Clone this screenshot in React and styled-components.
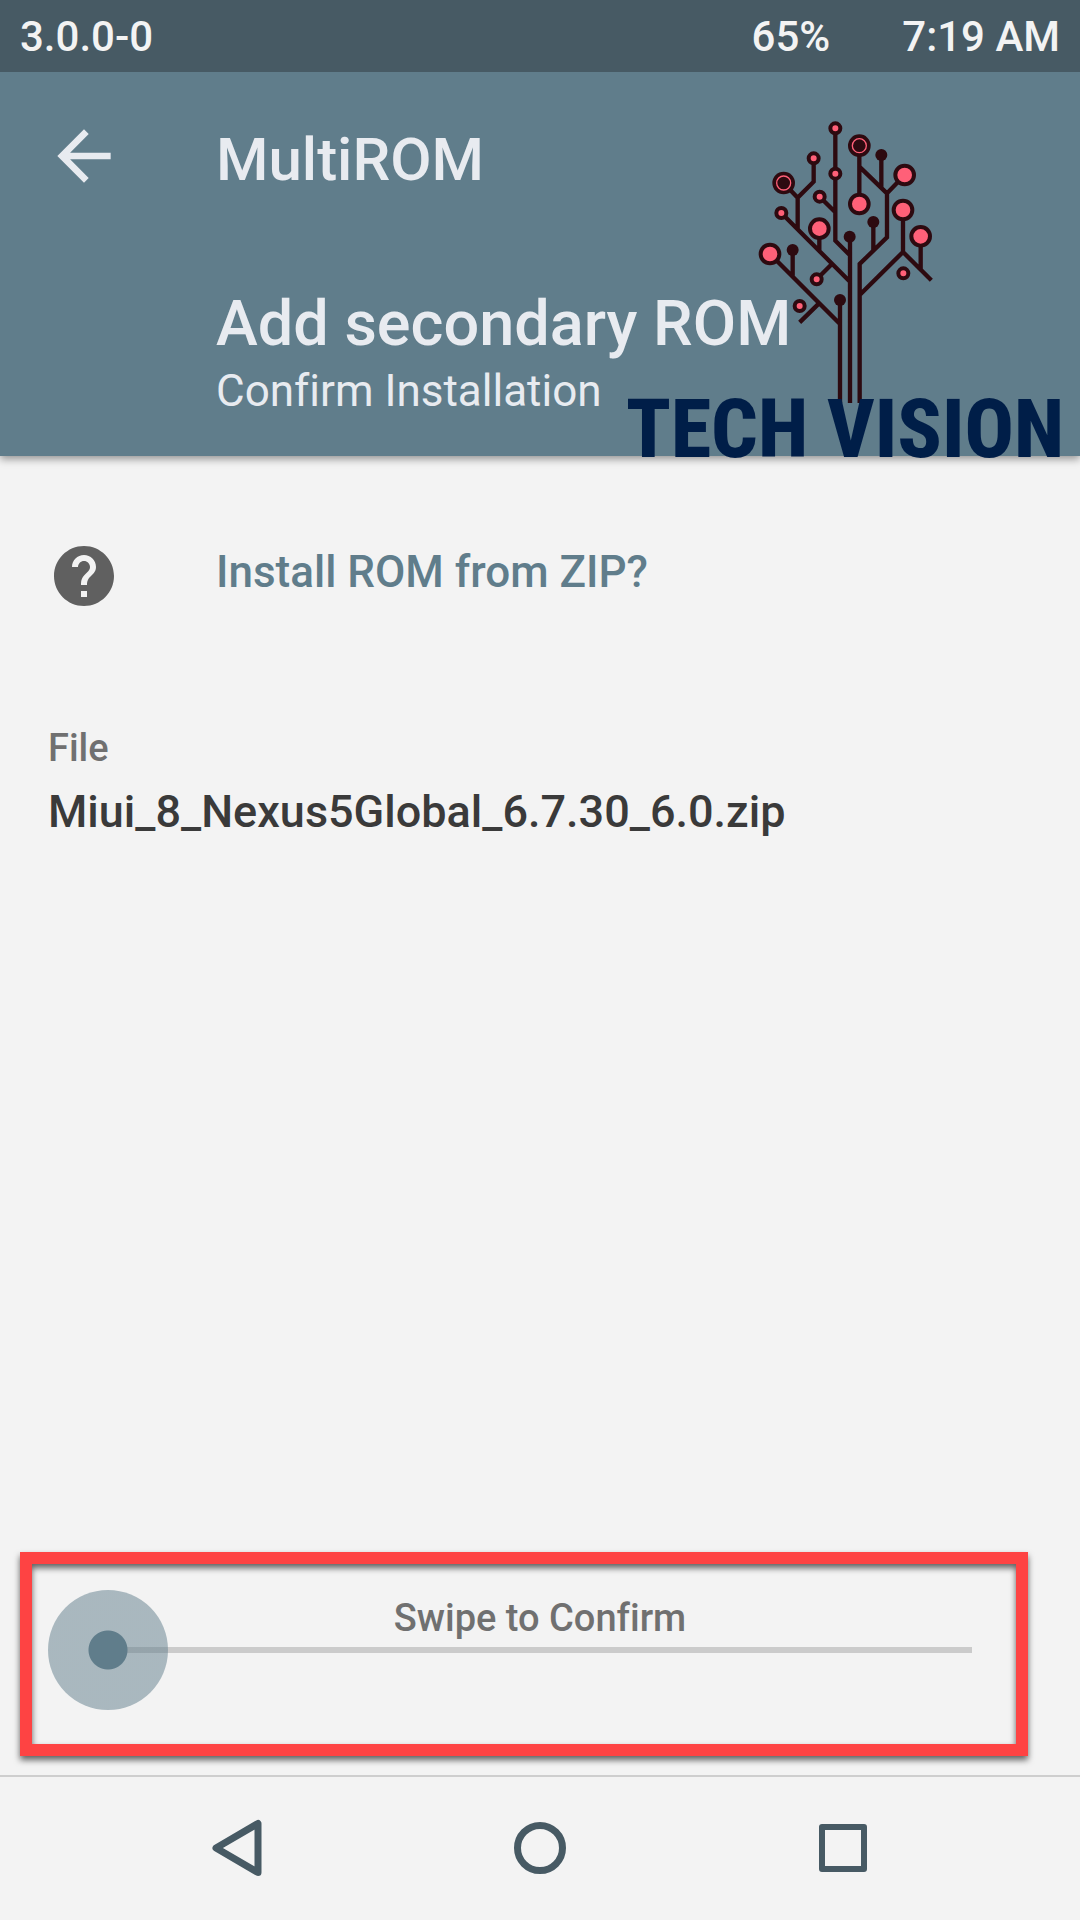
import React, { useState } from "react";
import styled, { createGlobalStyle } from "styled-components";

const GlobalStyle = createGlobalStyle`
  *, *::before, *::after { box-sizing: border-box; }
  body {
    margin: 0;
    background: #f3f3f3;
    font-family: Roboto, "Noto Sans", sans-serif;
    font-variant-ligatures: none;
  }
`;

const Screen = styled.div`
  position: relative;
  display: flex;
  flex-direction: column;
  min-height: 100vh;
`;

const StatusBar = styled.div`
  display: flex;
  align-items: center;
  gap: 72px;
  height: 72px;
  padding: 2px 20px 0;
  background: #475a64;
  color: #f3f3f3;
  font-size: 42px;
  font-weight: 500;
  line-height: 56px;
`;

const Version = styled.span`
  flex: 1;
`;

const Header = styled.header`
  padding-bottom: 36px;
  background: #607d8b;
  color: #e8ebf0;
  box-shadow: 0 3px 8px rgba(0, 0, 0, 0.4);
  clip-path: inset(0 0 -16px 0);
`;

const AppBar = styled.div`
  display: flex;
  align-items: center;
  height: 168px;
  padding-left: 44px;
`;

const IconButton = styled.button`
  display: flex;
  justify-content: center;
  padding: 0;
  border: 0;
  background: none;
  color: ${(p) => p.$color};
  cursor: pointer;
`;

const AppTitle = styled.div`
  padding-top: 8px;
  margin-left: 92px;
  font-size: 60px;
  font-weight: 500;
  line-height: 76px;
`;

const Headings = styled.div`
  padding: 46px 0 0 216px;
`;

const PageTitle = styled.h1`
  margin: 0;
  font-size: 63px;
  font-weight: 500;
  line-height: 76px;
`;

const PageSubtitle = styled.p`
  margin: 0;
  font-size: 44px;
  line-height: 58px;
`;

const Content = styled.main`
  flex: 1;
  padding: 84px 48px 0;
`;

const Question = styled.div`
  display: flex;
  gap: 96px;
`;

const QuestionText = styled.h2`
  margin: 4px 0 0;
  color: #607d8b;
  font-size: 44px;
  font-weight: 500;
  line-height: 56px;
`;

const FileInfo = styled.dl`
  margin: 112px 0 0;
`;

const FileLabel = styled.dt`
  color: #707070;
  font-size: 38px;
  font-weight: 500;
  line-height: 48px;
`;

const FileName = styled.dd`
  margin: 12px 0 0;
  color: #3a3a3a;
  font-size: 45px;
  font-weight: 500;
  line-height: 56px;
`;

const SwipeArea = styled.div`
  position: relative;
  height: 223px;
  padding: 42px 48px 0;
`;

const Highlight = styled.div`
  position: absolute;
  inset: 0 52px 19px 20px;
  border: 12px solid #fe4343;
  filter: drop-shadow(0 4px 3px rgba(0, 0, 0, 0.6));
  pointer-events: none;
`;

const SwipeLabel = styled.label`
  display: block;
  color: #707070;
  font-size: 38px;
  font-weight: 500;
  line-height: 48px;
  text-align: center;
`;

const SwipeSlider = styled.input`
  appearance: none;
  display: block;
  width: calc(100% - 60px);
  height: 120px;
  margin: -52px 0 0;
  background: linear-gradient(#cbcbcb, #cbcbcb) 60px center / 100% 6px no-repeat;
  cursor: pointer;

  &::-webkit-slider-thumb {
    appearance: none;
    width: 120px;
    height: 120px;
    border: 0;
    border-radius: 50%;
    background: radial-gradient(circle, #607d8b 19px, rgba(96, 125, 139, 0.5) 20px);
  }

  &::-moz-range-thumb {
    width: 120px;
    height: 120px;
    border: 0;
    border-radius: 50%;
    background: radial-gradient(circle, #607d8b 19px, rgba(96, 125, 139, 0.5) 20px);
  }
`;

const NavBar = styled.nav`
  display: grid;
  grid-template-columns: repeat(3, 1fr);
  align-items: center;
  height: 145px;
  padding: 0 86px 2px;
  border-top: 2px solid #cecece;
`;

const Brand = styled.div`
  position: absolute;
  top: 120px;
  right: 16px;
  display: flex;
  flex-direction: column;
  align-items: center;
  pointer-events: none;
`;

const BrandName = styled.div`
  margin-top: -18px;
  color: #001e48;
  font-family: "Roboto Condensed", "Liberation Sans Narrow", "DejaVu Sans Condensed", sans-serif;
  font-size: 82px;
  font-weight: 800;
  line-height: 84px;
  white-space: nowrap;
`;

const targets = [
  [286, 55], [221, 145], [286, 191], [239, 260],
  [124, 309], [230, 508], [179, 588], [490, 490],
];
const discs = [[494, 195], [358, 282], [489, 300], [238, 356], [542, 379], [90, 432]];
const rings = [[358, 107], [131, 219]];
const dots = [[424, 135], [400, 336], [329, 380], [158, 420], [300, 570]];

const branches = [
  "M300 570V879", "M330 380V879", "M359 879V462L441 382V250L494 195",
  "M286 55V392L330 436", "M221 145V215L173 263V357", "M131 219L173 263",
  "M124 309L330 515", "M239 260L286 307", "M238 356V422",
  "M358 107V282", "M358 170L441 250", "M424 135V235", "M400 336V423",
  "M489 300V426L359 555", "M489 426L574 511", "M542 379V480",
  "M90 432L300 642", "M158 420V502", "M230 508L278 460", "M179 637L237 580",
].join("");

function CircuitTree() {
  return (
    <svg width="175" height="285" viewBox="54 30 525 855" aria-hidden="true">
      <path d={branches} fill="none" stroke="#2d0a10" strokeWidth="13" />
      <g fill="#2d0a10">
        {dots.map(([x, y]) => <circle key={`${x}-${y}`} cx={x} cy={y} r="18" />)}
      </g>
      <g fill="#ff6078" stroke="#2d0a10" strokeWidth="12">
        {targets.map(([x, y]) => <circle key={`${x}-${y}`} cx={x} cy={y} r="15" />)}
        {discs.map(([x, y]) => <circle key={`${x}-${y}`} cx={x} cy={y} r="28" />)}
      </g>
      {rings.map(([x, y]) => (
        <g key={`${x}-${y}`} fill="#2d0a10">
          <circle cx={x} cy={y} r="34" />
          <circle cx={x} cy={y} r="21" stroke="#ff6078" strokeWidth="4" />
        </g>
      ))}
    </svg>
  );
}

export default function App() {
  const [progress, setProgress] = useState(0);

  return (
    <>
      <GlobalStyle />
      <Screen>
        <StatusBar>
          <Version>3.0.0-0</Version>
          <span>65%</span>
          <span>7:19 AM</span>
        </StatusBar>

        <Header>
          <AppBar>
            <IconButton $color="#e8ebf0" aria-label="Back">
              <svg width="80" height="80" viewBox="0 0 24 24" fill="currentColor">
                <path d="M20 11H7.83l5.59-5.59L12 4l-8 8 8 8 1.41-1.41L7.83 13H20v-2z" />
              </svg>
            </IconButton>
            <AppTitle>MultiROM</AppTitle>
          </AppBar>
          <Headings>
            <PageTitle>Add secondary ROM</PageTitle>
            <PageSubtitle>Confirm Installation</PageSubtitle>
          </Headings>
        </Header>

        <Content>
          <Question>
            <svg width="72" height="72" viewBox="0 0 24 24" fill="#606060" aria-hidden="true">
              <path d="M12 2C6.48 2 2 6.48 2 12s4.48 10 10 10 10-4.48 10-10S17.52 2 12 2zm1 17h-2v-2h2v2zm2.07-7.75l-.9.92C13.45 12.9 13 13.5 13 15h-2v-.5c0-1.1.45-2.1 1.17-2.83l1.24-1.26c.37-.36.59-.86.59-1.41 0-1.1-.9-2-2-2s-2 .9-2 2H8c0-2.21 1.79-4 4-4s4 1.79 4 4c0 .88-.36 1.68-.93 2.25z" />
            </svg>
            <QuestionText>Install ROM from ZIP?</QuestionText>
          </Question>
          <FileInfo>
            <FileLabel>File</FileLabel>
            <FileName>Miui_8_Nexus5Global_6.7.30_6.0.zip</FileName>
          </FileInfo>
        </Content>

        <SwipeArea>
          <SwipeLabel htmlFor="confirm">Swipe to Confirm</SwipeLabel>
          <SwipeSlider
            id="confirm"
            type="range"
            min="0"
            max="100"
            value={progress}
            onChange={(e) => setProgress(Number(e.target.value))}
          />
          <Highlight />
        </SwipeArea>

        <NavBar>
          <IconButton $color="#475a64" aria-label="Navigate back">
            <svg width="60" height="60" viewBox="0 0 60 60" fill="none" stroke="currentColor" strokeWidth="7" strokeLinejoin="round">
              <path d="M51 5.500V54.500L9 30Z" />
            </svg>
          </IconButton>
          <IconButton $color="#475a64" aria-label="Home">
            <svg width="60" height="60" viewBox="0 0 60 60" fill="none" stroke="currentColor" strokeWidth="7">
              <circle cx="30" cy="30" r="22.500" />
            </svg>
          </IconButton>
          <IconButton $color="#475a64" aria-label="Recent apps">
            <svg width="60" height="60" viewBox="0 0 60 60" fill="none" stroke="currentColor" strokeWidth="6" strokeLinejoin="round">
              <rect x="9" y="9" width="42" height="42" />
            </svg>
          </IconButton>
        </NavBar>

        <Brand>
          <CircuitTree />
          <BrandName>TECH VISION</BrandName>
        </Brand>
      </Screen>
    </>
  );
}
